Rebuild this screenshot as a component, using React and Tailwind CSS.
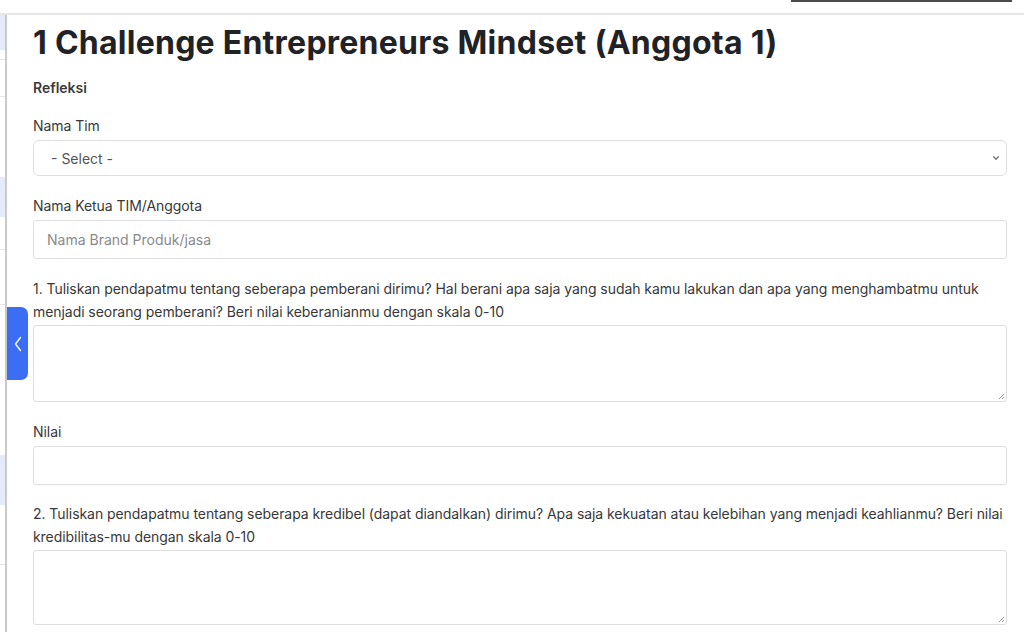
import React from 'react';

const font = { fontFamily: 'Inter, "Liberation Sans", sans-serif' };

function Label({ children, className = '' }) {
    return <p className={`text-[14px] leading-[23px] tracking-[-0.06px] text-[#383838] ${className}`}>{children}</p>;
}

function Resize() {
    return (
        <svg className="absolute right-[1px] bottom-[1px]" width="7" height="7" viewBox="0 0 7 7">
            <path d="M6 1L1 6M6 4L4 6" stroke="#999" strokeWidth="1" />
        </svg>
    );
}

export default function App() {
    return (
        <div className="relative w-[1024px] h-[632px] overflow-hidden bg-white" style={font}>
            {/* Top strip behind the modal */}
            <div className="relative h-[15px] bg-white border-b-2 border-[#e6e6e6]">
                <div className="absolute left-[791px] top-0 w-[221px] h-[2px] bg-[#4a4a4a]" />
            </div>

            <div className="flex h-[617px]">
                {/* Page behind, peeking out at the left */}
                <div className="w-[5px] flex flex-col bg-white">
                    <div className="h-[35px] bg-[#e3ebf8]" />
                    <div className="h-[10px] border-b border-[#e5e5e5]" />
                    <div className="h-[37px] border-b border-[#e5e5e5]" />
                    <div className="h-[80px]" />
                    <div className="h-[40px] bg-[#e3ebf8]" />
                    <div className="h-[33px] border-b border-[#e5e5e5]" />
                    <div className="h-[55px] border-b border-[#e5e5e5]" />
                    <div className="h-[150px]" />
                    <div className="h-[50px] bg-[#e3ebf8]" />
                    <div className="h-[60px] border-b border-[#e5e5e5]" />
                </div>
                <div className="w-[2px] bg-[#c9c9c9]" />

                {/* Modal content */}
                <div className="flex-1 pl-[26px] pr-[17px] pt-[8px] text-[#333]">
                    <h1 className="text-[32px] leading-[40px] font-bold text-[#1f2226] tracking-[0.25px]">
                        1 Challenge Entrepreneurs Mindset (Anggota 1)
                    </h1>

                    <p className="mt-[15px] text-[14px] leading-[20px] font-semibold text-[#3a3a3a]">Refleksi</p>

                    <Label className="mt-[16px]">Nama Tim</Label>
                    <div className="mt-[3px] h-[36px] flex items-center justify-between rounded-[6px] border border-[#dedede] pl-[17px] pr-[3px]">
                        <span className="text-[14px] text-[#555]">- Select -</span>
                        <svg width="14" height="14" viewBox="0 0 24 24" fill="none" stroke="#777" strokeWidth="2.5" strokeLinecap="round" strokeLinejoin="round">
                            <path d="M8 10l4 4 4-4" />
                        </svg>
                    </div>

                    <Label className="mt-[18px]">Nama Ketua TIM/Anggota</Label>
                    <div className="mt-[3px] h-[39px] flex items-center rounded-[3px] border border-[#dedede] px-[13px]">
                        <span className="text-[14px] text-[#8a8a8a]">Nama Brand Produk/jasa</span>
                    </div>

                    <Label className="mt-[18px]">
                        1. Tuliskan pendapatmu tentang seberapa pemberani dirimu? Hal berani apa saja yang sudah kamu lakukan dan apa yang menghambatmu untuk menjadi seorang pemberani? Beri nilai keberanianmu dengan skala 0-10
                    </Label>
                    <div className="relative mt-[2px] h-[77px] rounded-[3px] border border-[#dedede]">
                        <Resize />
                    </div>

                    <Label className="mt-[18px]">Nilai</Label>
                    <div className="mt-[3px] h-[39px] rounded-[3px] border border-[#dedede]" />

                    <Label className="mt-[17px]">
                        2. Tuliskan pendapatmu tentang seberapa kredibel (dapat diandalkan) dirimu? Apa saja kekuatan atau kelebihan yang menjadi keahlianmu? Beri nilai kredibilitas-mu dengan skala 0-10
                    </Label>
                    <div className="relative mt-[2px] h-[75px] rounded-[3px] border border-[#dedede]">
                        <Resize />
                    </div>
                </div>
            </div>

            {/* Sidebar toggle tab */}
            <div className="absolute left-[7px] top-[307px] w-[21px] h-[73px] rounded-r-[7px] bg-[#3b6ef3] flex items-center justify-center">
                <svg width="10" height="16" viewBox="0 0 10 16" fill="none" stroke="white" strokeWidth="1.3" strokeLinecap="round" strokeLinejoin="round">
                    <path d="M7.5 1.5L2.5 8l5 6.5" />
                </svg>
            </div>
        </div>
    );
}
